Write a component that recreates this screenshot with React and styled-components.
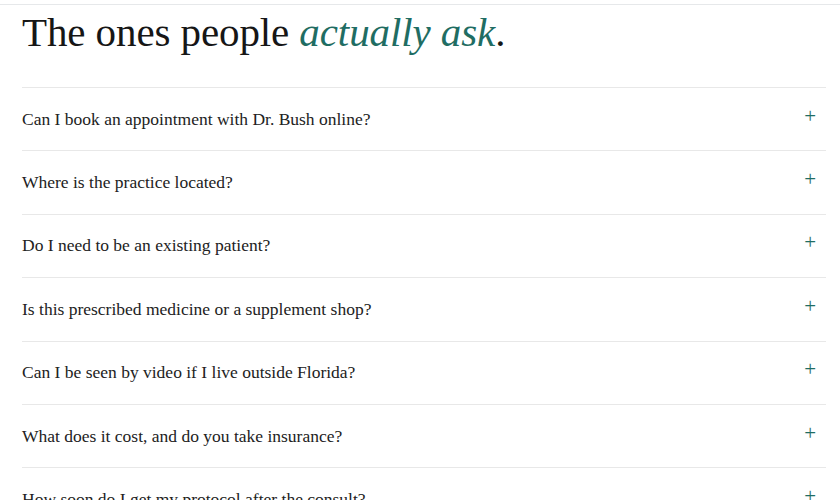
import React, { useState } from "react";
import styled, { createGlobalStyle } from "styled-components";

const Global = createGlobalStyle`
  html, body {
    margin: 0;
    padding: 0;
    background: #ffffff;
    font-family: "Liberation Serif", "DejaVu Serif", serif;
    color: #1c1c1c;
  }
`;

const TopBar = styled.div`
  height: 4px;
  border-bottom: 1px solid #e6e8ea;
`;

const Section = styled.section`
  padding: 0 14px 0 22px;
`;

const Title = styled.h2`
  margin: 0;
  padding-top: 3px;
  height: 79px;
  font-size: 41px;
  font-weight: 400;
  line-height: 48px;
  letter-spacing: -0.1px;
  color: #161616;
  em {
    color: #1f6d63;
    font-style: italic;
  }
`;

const List = styled.div`
  border-top: 1px solid #e8e8e8;
`;

const Row = styled.div`
  border-bottom: 1px solid #e8e8e8;
`;

const Question = styled.button`
  width: 100%;
  height: 62.4px;
  display: flex;
  align-items: center;
  justify-content: space-between;
  padding: 0 10px 0 0;
  border: 0;
  background: none;
  cursor: pointer;
  font-family: inherit;
  font-size: 17.5px;
  color: #222;
  text-align: left;
`;

const Plus = styled.span`
  font-size: 21px;
  color: #1f6d63;
  line-height: 1;
  margin-top: -6px;
`;

const Answer = styled.p`
  margin: 0 0 18px;
  font-size: 16px;
  color: #555;
`;

const faqs = [
  "Can I book an appointment with Dr. Bush online?",
  "Where is the practice located?",
  "Do I need to be an existing patient?",
  "Is this prescribed medicine or a supplement shop?",
  "Can I be seen by video if I live outside Florida?",
  "What does it cost, and do you take insurance?",
  "How soon do I get my protocol after the consult?",
];

export default function App() {
  const [open, setOpen] = useState(null);
  return (
    <>
      <Global />
      <TopBar />
      <Section>
        <Title>
          The ones people <em>actually ask</em>.
        </Title>
        <List>
          {faqs.map((q, i) => (
            <Row key={i}>
              <Question onClick={() => setOpen(open === i ? null : i)}>
                {q}
                <Plus>{open === i ? "−" : "+"}</Plus>
              </Question>
              {open === i && <Answer>Details coming soon.</Answer>}
            </Row>
          ))}
        </List>
      </Section>
    </>
  );
}
